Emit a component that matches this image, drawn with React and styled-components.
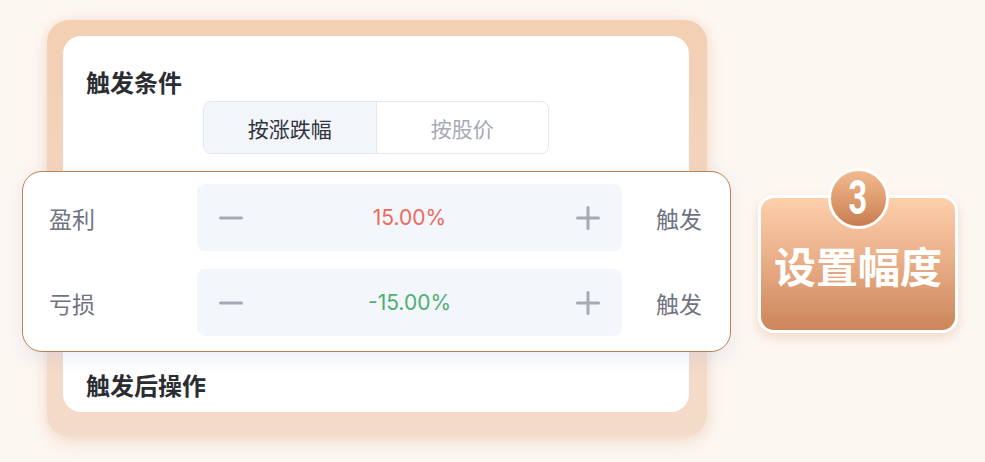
import React from "react";
import styled, { createGlobalStyle } from "styled-components";

const Global = createGlobalStyle`
  html, body { margin: 0; padding: 0; }
  body {
    background: #fdf7f2;
    font-family: "Noto Sans CJK SC", "Noto Sans", sans-serif;
    width: 985px;
    height: 462px;
    overflow: hidden;
  }
`;

const Stage = styled.div`
  display: flex;
  align-items: flex-start;
  gap: 51px;
  padding: 20px 0 0 47px;
  width: 985px;
  height: 462px;
  box-sizing: border-box;
`;

const Frame = styled.div`
  position: relative;
  width: 660px;
  height: 417px;
  box-sizing: border-box;
  padding: 16px 18px 25px 16px;
  border-radius: 22px;
  background: linear-gradient(180deg, #f3cfb3 0%, #f3d6c3 60%, #f4dcca 100%);
  box-shadow: 0 6px 18px rgba(232, 196, 168, 0.45), 0 0 10px rgba(240, 215, 195, 0.4);
`;

const Card = styled.div`
  display: flex;
  flex-direction: column;
  align-items: flex-start;
  height: 100%;
  box-sizing: border-box;
  padding: 31px 22px 12px 23px;
  background: #fff;
  border-radius: 18px;
`;

const Title = styled.div`
  font-size: 24px;
  line-height: 30px;
  font-weight: 700;
  color: #2b2d33;
  margin-top: ${(p) => (p.$bottom ? "auto" : "0")};
`;

const Segmented = styled.div`
  display: flex;
  margin: 4px 0 0 117px;
  width: 346px;
  height: 53px;
  box-sizing: border-box;
  border: 1px solid #e2e6ee;
  border-radius: 8px;
  overflow: hidden;
`;

const Segment = styled.div`
  flex: 1;
  display: flex;
  align-items: center;
  justify-content: center;
  font-size: 21px;
  background: ${(p) => (p.$active ? "#f2f5fa" : "#fff")};
  color: ${(p) => (p.$active ? "#33363f" : "#a8abb5")};
  & + & { border-left: 1px solid #e2e6ee; }
`;

const Popup = styled.div`
  position: absolute;
  left: -25px;
  top: 151px;
  width: 709px;
  height: 181px;
  box-sizing: border-box;
  padding: 12px 27px 14px 26px;
  background: #fff;
  border: 1px solid #b98154;
  border-radius: 20px;
  box-shadow: 0 6px 18px rgba(190, 198, 225, 0.3);
  display: grid;
  grid-template-columns: 148px 425px 1fr;
  grid-auto-rows: 67px;
  row-gap: 18px;
  align-items: center;
`;

const Label = styled.div`
  font-size: 23px;
  color: #70737f;
  padding-left: ${(p) => (p.$end ? "34px" : "0")};
`;

const Stepper = styled.div`
  height: 100%;
  display: flex;
  align-items: center;
  justify-content: space-between;
  padding: 0 22px;
  background: #f3f6fb;
  border-radius: 8px;
`;

const Value = styled.div`
  font-family: "Inter", "Noto Sans CJK SC", sans-serif;
  font-size: 21px;
  color: ${(p) => p.$color};
`;

const Icon = styled.svg`
  width: 24px;
  height: 24px;
  display: block;
`;

const Minus = () => (
  <Icon viewBox="0 0 24 24">
    <rect x="0" y="10.5" width="24" height="3" rx="1.5" fill="#a7a9b4" />
  </Icon>
);

const Plus = () => (
  <Icon viewBox="0 0 24 24">
    <rect x="0" y="10.5" width="24" height="3" rx="1.5" fill="#a7a9b4" />
    <rect x="10.5" y="0" width="3" height="24" rx="1.5" fill="#a7a9b4" />
  </Icon>
);

const Badge = styled.div`
  display: flex;
  flex-direction: column;
  align-items: center;
  width: 200px;
  margin-top: 148px;
`;

const Circle = styled.div`
  position: relative;
  z-index: 1;
  width: 61px;
  height: 61px;
  box-sizing: border-box;
  border: 3px solid #fff;
  border-radius: 50%;
  background: linear-gradient(180deg, #f2b98f 0%, #dc9a6d 55%, #c77b50 100%);
  display: flex;
  align-items: center;
  justify-content: center;
`;

const Num = styled.span`
  font-family: "Roboto", "Liberation Sans", sans-serif;
  font-weight: 700;
  font-size: 48px;
  line-height: 1;
  color: #fff;
  transform: scaleX(0.68);
  margin-top: -1px;
`;

const BadgeCard = styled.div`
  margin-top: -34px;
  width: 200px;
  height: 138px;
  box-sizing: border-box;
  border: 3px solid #fff;
  border-radius: 16px;
  background: linear-gradient(180deg, #fccfab 0%, #eab089 45%, #cc855a 100%);
  box-shadow: 0 5px 12px rgba(205, 145, 105, 0.28);
  display: flex;
  align-items: center;
  justify-content: center;
  padding-top: 0;
  font-size: 42px;
  font-weight: 700;
  color: #fff;
`;

export default function App() {
  return (
    <>
      <Global />
      <Stage>
        <Frame>
          <Card>
            <Title>触发条件</Title>
            <Segmented>
              <Segment $active>按涨跌幅</Segment>
              <Segment>按股价</Segment>
            </Segmented>
            <Title $bottom>触发后操作</Title>
          </Card>
          <Popup>
            <Label>盈利</Label>
            <Stepper>
              <Minus />
              <Value $color="#ec6a5c">15.00%</Value>
              <Plus />
            </Stepper>
            <Label $end>触发</Label>
            <Label>亏损</Label>
            <Stepper>
              <Minus />
              <Value $color="#4fae72">-15.00%</Value>
              <Plus />
            </Stepper>
            <Label $end>触发</Label>
          </Popup>
        </Frame>
        <Badge>
          <Circle>
            <Num>3</Num>
          </Circle>
          <BadgeCard>设置幅度</BadgeCard>
        </Badge>
      </Stage>
    </>
  );
}
